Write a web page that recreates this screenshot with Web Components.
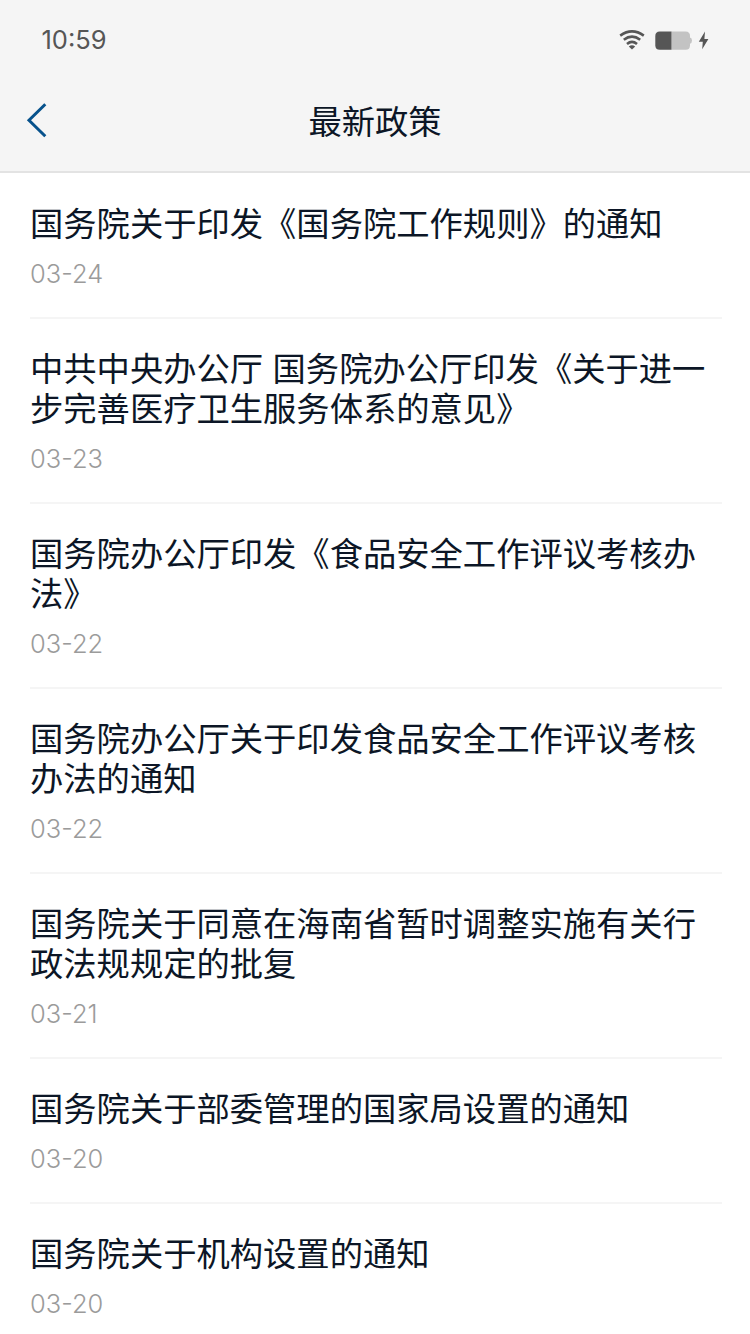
<!DOCTYPE html>
<html lang="zh-CN">
<head>
  <meta charset="UTF-8">
  <meta name="viewport" content="width=device-width, initial-scale=1.0">
  <title>最新政策</title>
  <style>
    body {
      margin: 0;
      height: 1334px;
      overflow: hidden;
      background: #fff;
      color: #0c1626;
      font-family: "Noto Sans CJK SC", sans-serif;
    }
  </style>
</head>
<body>

  <status-bar>10:59</status-bar>
  <nav-bar>最新政策</nav-bar>

  <policy-list>
    <policy-item date="03-24">国务院关于印发《国务院工作规则》的通知</policy-item>
    <policy-item date="03-23">中共中央办公厅 国务院办公厅印发《关于进一步完善医疗卫生服务体系的意见》</policy-item>
    <policy-item date="03-22">国务院办公厅印发《食品安全工作评议考核办法》</policy-item>
    <policy-item date="03-22">国务院办公厅关于印发食品安全工作评议考核办法的通知</policy-item>
    <policy-item date="03-21">国务院关于同意在海南省暂时调整实施有关行政法规规定的批复</policy-item>
    <policy-item date="03-20">国务院关于部委管理的国家局设置的通知</policy-item>
    <policy-item date="03-20">国务院关于机构设置的通知</policy-item>
  </policy-list>

  <script>

    class StatusBar extends HTMLElement {

      constructor() {
        super();
        this.attachShadow({ mode: 'open' });
        this.shadowRoot.innerHTML = `
          <style>
            :host {
              display: flex;
              justify-content: space-between;
              align-items: center;
              box-sizing: border-box;
              height: 80px;
              padding: 0 40px 0 41.5px;
              background: #f5f5f5;
              color: #565656;
              font: 400 25.5px/30px Inter, sans-serif;
            }
            svg {
              display: block;
            }
          </style>
          <slot></slot>
          <svg width="92" height="24" viewBox="618 28 92 24">
            <!-- wifi -->
            <g fill="none" stroke="#565656" stroke-width="2.6">
              <path d="M620.2 35.6Q632 27.2 643.8 35.6"/>
              <path d="M623.8 39.8Q632 33.6 640.2 39.8"/>
              <path d="M627 43.9Q632 39.8 637 43.9"/>
            </g>
            <path d="M628.8 46.5Q632 44.2 635.2 46.5L632 49.5Z" fill="#565656"/>
            <!-- battery -->
            <path d="M671.5 31.5H685.5Q690 31.5 690 36V45.2Q690 49.7 685.5 49.7H671.5Z" fill="#c3c3c3"/>
            <path d="M690 37.4Q692 38 692 40.6T690 43.8Z" fill="#c3c3c3"/>
            <path d="M671.5 31.5H659.8Q655.3 31.5 655.3 36V45.2Q655.3 49.7 659.8 49.7H671.5Z" fill="#565656"/>
            <path d="M705 31.5L698.8 41.7H702.8L702.2 49.3L708.4 38.9H704.4Z" fill="#565656"/>
          </svg>
        `;
      }

    }

    customElements.define('status-bar', StatusBar);

    class NavBar extends HTMLElement {

      constructor() {
        super();
        this.attachShadow({ mode: 'open' });
        this.shadowRoot.innerHTML = `
          <style>
            :host {
              display: grid;
              grid-template-columns: 50px 1fr 50px;
              align-items: center;
              box-sizing: border-box;
              height: 93px;
              padding-bottom: 11px;
              border-bottom: 2px solid #e3e3e3;
              background: #f5f5f5;
            }
            svg {
              display: block;
              margin-left: 25px;
            }
            .title {
              font-size: 33.3px;
              line-height: 40px;
              text-align: center;
            }
          </style>
          <svg width="24" height="40" viewBox="0 0 24 40">
            <path d="M20.3 4.2L4 20.2L20.3 36.2" fill="none" stroke="#07528c" stroke-width="3"/>
          </svg>
          <div class="title"><slot></slot></div>
        `;
      }

    }

    customElements.define('nav-bar', NavBar);

    class PolicyList extends HTMLElement {

      constructor() {
        super();
        this.attachShadow({ mode: 'open' });
        this.shadowRoot.innerHTML = `
          <style>
            :host {
              display: flex;
              flex-direction: column;
              padding: 1px 28px 0 30px;
            }
          </style>
          <slot></slot>
        `;
      }

    }

    customElements.define('policy-list', PolicyList);

    class PolicyItem extends HTMLElement {

      constructor() {
        super();
        this.attachShadow({ mode: 'open' });
        this.shadowRoot.innerHTML = `
          <style>
            :host {
              display: block;
              padding: 28px 0;
              border-bottom: 2px solid #f5f5f5;
            }
            .title {
              font-size: 33.3px;
              line-height: 40px;
              word-spacing: 2px;
              text-spacing-trim: space-all;
            }
            .date {
              margin-top: 17px;
              color: #9b9b9b;
              font: 350 25.5px/30px Inter, sans-serif;
              font-feature-settings: "case";
            }
          </style>
          <div class="title"><slot></slot></div>
          <div class="date">${this.getAttribute('date')}</div>
        `;
      }

    }

    customElements.define('policy-item', PolicyItem);

  </script>
</body>
</html>
